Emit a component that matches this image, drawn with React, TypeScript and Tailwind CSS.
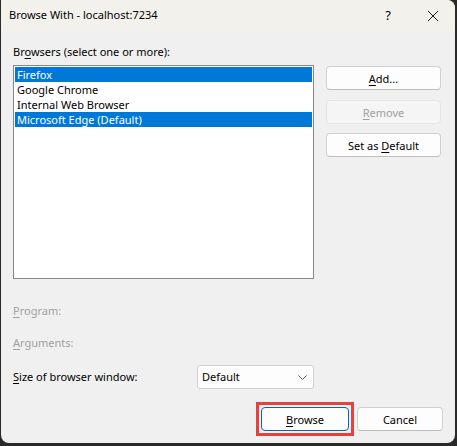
import React from "react";

const font = { fontFamily: '"Segoe UI", "Noto Sans", "Open Sans", sans-serif' };

function Btn({ children, w, disabled, primary }: { children: React.ReactNode; w: string; disabled?: boolean; primary?: boolean }) {
  const base = "h-[24px] rounded-[4px] border flex items-center justify-center text-[11px] leading-none";
  const cls = disabled
    ? `${base} bg-[#f5f5f5] border-[#e5e5e5] text-[#a0a0a0]`
    : primary
    ? `${base} bg-[#fdfdfd] border-[#0067c0] text-black`
    : `${base} bg-[#fdfdfd] border-[#d0d0d0] border-b-[#bdbdbd] text-black`;
  return (
    <div className={`${cls} ${w}`}>
      <span>{children}</span>
    </div>
  );
}

function U({ children }: { children: React.ReactNode }) {
  return <span className="underline underline-offset-[2px] decoration-1">{children}</span>;
}

export default function App() {
  const items = [
    { name: "Firefox", sel: true },
    { name: "Google Chrome", sel: false },
    { name: "Internal Web Browser", sel: false },
    { name: "Microsoft Edge (Default)", sel: true },
  ];
  return (
    <div className="w-[457px] h-[446px] bg-[#2a2a2a] flex" style={font}>
      <div className="ml-[1px] w-[454px] h-[443px] bg-[#f0f0f0] rounded-tr-[8px] rounded-br-[8px] rounded-bl-[8px] overflow-hidden flex flex-col">
        {/* Title bar */}
        <div className="h-[31px] bg-[#f3f1ec] flex items-center pl-[8px] text-[11px] text-black">
          <span className="flex-1">Browse With - localhost:7234</span>
          <span className="w-[20px] text-center text-[13px] mr-[29px]">?</span>
          <svg width="12" height="12" viewBox="0 0 12 12" className="mr-[16px]">
            <path d="M1 1 L11 11 M11 1 L1 11" stroke="#1a1a1a" strokeWidth="1" />
          </svg>
        </div>
        {/* Body */}
        <div className="flex flex-col pl-[12px] pt-[13px] text-[11px] text-black">
          <div className="h-[16px] leading-[16px]">
            Br<U>o</U>wsers (select one or more):
          </div>
          <div className="flex mt-[5px]">
            <div className="w-[301px] h-[214px] border border-[#828790] bg-white p-[1px]">
              {items.map((it) => (
                <div
                  key={it.name}
                  className={`h-[15px] leading-[15px] pl-[2px] ${it.sel ? "bg-[#0078d7] text-white" : "text-black"}`}
                >
                  {it.name}
                </div>
              ))}
            </div>
            <div className="ml-[12px] flex flex-col pt-[1px]">
              <Btn w="w-[115px]">
                <U>A</U>dd...
              </Btn>
              <div className="h-[10px]" />
              <Btn w="w-[115px]" disabled>
                <U>R</U>emove
              </Btn>
              <div className="h-[9px]" />
              <Btn w="w-[115px]">
                Set as <U>D</U>efault
              </Btn>
            </div>
          </div>
          <div className="mt-[24px] h-[16px] leading-[16px] text-[#a0a0a0]">
            <U>P</U>rogram:
          </div>
          <div className="mt-[16px] h-[16px] leading-[16px] text-[#a0a0a0]">
            <U>A</U>rguments:
          </div>
          <div className="mt-[14px] flex items-center h-[24px]">
            <div className="w-[184px]">
              <U>S</U>ize of browser window:
            </div>
            <div className="w-[117px] h-[24px] bg-[#fdfdfd] border border-[#d0d0d0] rounded-[3px] flex items-center pl-[4px] pr-[6px]">
              <span className="flex-1">Default</span>
              <svg width="9" height="5" viewBox="0 0 9 5">
                <path d="M0.5 0.5 L4.5 4.5 L8.5 0.5" stroke="#5f5f5f" strokeWidth="1" fill="none" />
              </svg>
            </div>
          </div>
        </div>
        {/* Footer */}
        <div className="mt-[13px] flex justify-end pr-[12px] items-center">
          <div className="w-[98px] h-[34px] border-[3px] border-[#e8403d] p-[2px] flex items-center">
            <Btn w="w-[88px]" primary>
              <U>B</U>rowse
            </Btn>
          </div>
          <div className="ml-[3px]">
            <Btn w="w-[86px]">Cancel</Btn>
          </div>
        </div>
      </div>
    </div>
  );
}
